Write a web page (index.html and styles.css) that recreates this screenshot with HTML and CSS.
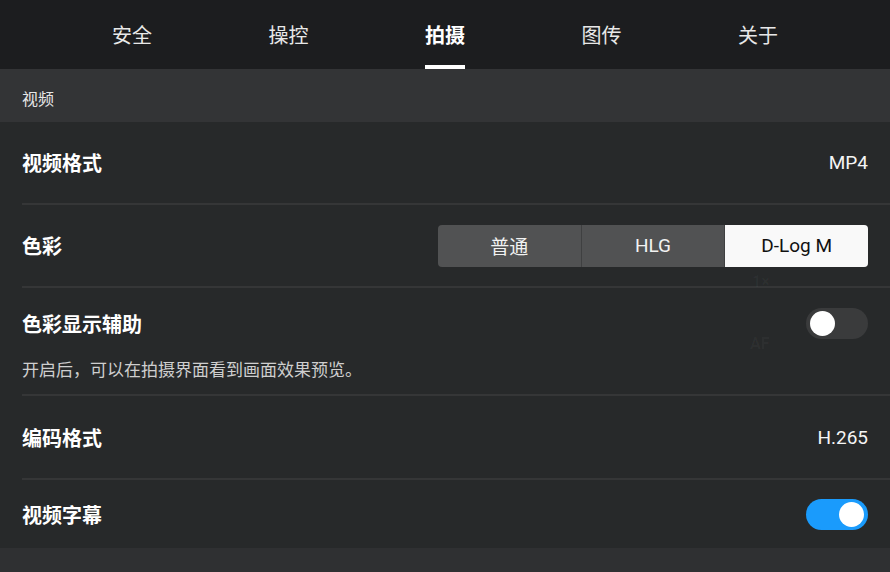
FILE: index.html
```html
<!DOCTYPE html>
<html lang="zh">
<head>
<meta charset="utf-8">
<link rel="stylesheet" href="styles.css">
</head>
<body>
<div class="app">
  <nav class="tabs">
    <div class="tab">安全</div>
    <div class="tab">操控</div>
    <div class="tab active">拍摄</div>
    <div class="tab">图传</div>
    <div class="tab">关于</div>
  </nav>
  <div class="section-head">视频</div>
  <div class="list">
    <div class="row">
      <span class="label">视频格式</span>
      <span class="value">MP4</span>
    </div>
    <div class="row">
      <span class="label">色彩</span>
      <div class="segmented">
        <div class="seg">普通</div>
        <div class="seg">HLG</div>
        <div class="seg selected">D-Log M</div>
      </div>
    </div>
    <div class="row row-tall">
      <div class="row-main">
        <span class="label">色彩显示辅助</span>
        <div class="toggle"><div class="knob"></div></div>
      </div>
      <div class="desc">开启后，可以在拍摄界面看到画面效果预览。</div>
    </div>
    <div class="row row-4">
      <span class="label">编码格式</span>
      <span class="value">H.265</span>
    </div>
    <div class="row row-last">
      <span class="label">视频字幕</span>
      <div class="toggle on"><div class="knob"></div></div>
    </div>
  </div>
  <div class="ghost ghost-1x">1×</div>
  <div class="ghost ghost-af">AF</div>
</div>
</body>
</html>
```

FILE: styles.css
```css
* { box-sizing: border-box; }
html, body { margin: 0; padding: 0; }
body {
  background: #2f3032;
  font-family: "Noto Sans CJK SC", "Roboto", sans-serif;
  color: #f2f2f2;
}
.app {
  position: relative;
  width: 890px;
  height: 572px;
  overflow: hidden;
  background: #2f3032;
}
.tabs {
  height: 69px;
  background: #1c1d1f;
  display: flex;
  justify-content: center;
}
.tab {
  width: 156.5px;
  text-align: center;
  font-size: 20px;
  line-height: 70px;
  color: #e8e8e8;
  position: relative;
}
.tab.active {
  font-weight: 700;
  color: #ffffff;
}
.tab.active::after {
  content: "";
  position: absolute;
  left: 58px;
  width: 40px;
  bottom: 0;
  height: 4px;
  background: #ffffff;
}
.section-head {
  height: 53px;
  background: #333436;
  padding-left: 22px;
  font-size: 16px;
  line-height: 58px;
  color: #e6e6e6;
}
.list {
  background: #27292a;
}
.row {
  display: flex;
  align-items: center;
  justify-content: space-between;
  height: 83px;
  margin-left: 22px;
  padding-right: 22px;
  border-bottom: 2px solid #353637;
}
.row-tall {
  height: 108px;
  flex-direction: column;
  align-items: stretch;
  justify-content: flex-start;
}
.row-main {
  display: flex;
  align-items: center;
  justify-content: space-between;
  height: 70px;
}
.desc {
  font-size: 17px;
  color: #cfcfcf;
  line-height: 22px;
  margin-top: 0;
}
.row-4 { height: 84px; }
.row-last {
  height: 68px;
  border-bottom: none;
}
.label {
  font-size: 20px;
  font-weight: 700;
  color: #ffffff;
}
.value {
  font-family: "Roboto", "Noto Sans CJK SC", sans-serif;
  font-size: 19px;
  color: #f5f5f5;
}
.segmented {
  display: flex;
  width: 430px;
  height: 42px;
  border-radius: 4px;
  overflow: hidden;
  background: #515253;
}
.seg {
  flex: 1;
  display: flex;
  align-items: center;
  justify-content: center;
  font-size: 19px;
  font-family: "Roboto", "Noto Sans CJK SC", sans-serif;
  color: #f2f2f2;
  border-right: 1px solid #3f4041;
}
.seg:last-child { border-right: none; }
.seg.selected {
  background: #f9f9f9;
  color: #111111;
}
.toggle {
  width: 62px;
  height: 31px;
  border-radius: 16px;
  background: #3a3b3c;
  padding: 3px 4px;
  display: flex;
  align-items: center;
}
.toggle .knob {
  width: 25px;
  height: 25px;
  border-radius: 50%;
  background: #ffffff;
}
.toggle.on {
  background: #1a9bfc;
  justify-content: flex-end;
}
.ghost {
  position: absolute;
  font-family: "Roboto", sans-serif;
  font-weight: 700;
  color: rgba(255,255,255,0.035);
  font-size: 16px;
}
.ghost-1x { left: 752px; top: 272px; }
.ghost-af { left: 750px; top: 334px; }
```
